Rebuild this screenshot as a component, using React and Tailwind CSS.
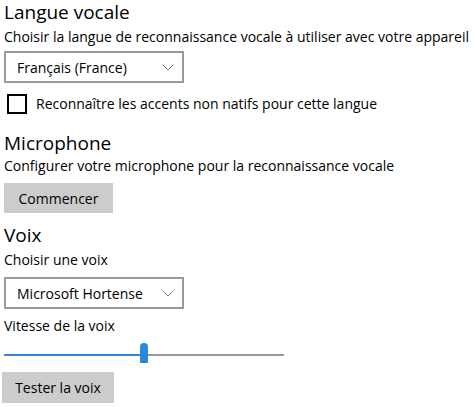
import React from "react";

function Chevron() {
  return (
    <svg width="12" height="7" viewBox="0 0 12 7" className="block">
      <path d="M0.5 0.5 L6 6 L11.5 0.5" fill="none" stroke="#7a7a7a" strokeWidth="1" />
    </svg>
  );
}

function Select({ label }) {
  return (
    <div className="w-[180px] h-[32px] border-2 border-[#999999] flex items-center justify-between pl-[11px] pr-[8px] text-[14px] text-black">
      <span>{label}</span>
      <Chevron />
    </div>
  );
}

export default function App() {
  return (
    <div
      className="w-[475px] h-[407px] bg-white text-black overflow-hidden pl-[4px]"
      style={{ fontFamily: '"Open Sans", "Noto Sans", sans-serif' }}
    >
      <div className="text-[19px] leading-[24px]">Langue vocale</div>
      <div className="text-[14px] leading-[20px] mt-[3px] whitespace-nowrap">
        Choisir la langue de reconnaissance vocale à utiliser avec votre appareil
      </div>
      <div className="mt-[4px]">
        <Select label="Français (France)" />
      </div>
      <div className="flex items-center mt-[11px] ml-[3px] gap-[9px]">
        <div className="w-[20px] h-[20px] border-2 border-black" />
        <span className="text-[14px] leading-[20px]">Reconnaître les accents non natifs pour cette langue</span>
      </div>
      <div className="text-[19px] leading-[24px] mt-[17px]">Microphone</div>
      <div className="text-[14px] leading-[20px] mt-[1px] whitespace-nowrap">
        Configurer votre microphone pour la reconnaissance vocale
      </div>
      <button className="mt-[7px] w-[109px] h-[30px] bg-[#cccccc] text-[14px] text-black flex items-center justify-center">
        Commencer
      </button>
      <div className="text-[19px] leading-[24px] mt-[10px]">Voix</div>
      <div className="text-[14px] leading-[20px] mt-[3px]">Choisir une voix</div>
      <div className="mt-[7px]">
        <Select label="Microsoft Hortense" />
      </div>
      <div className="text-[14px] leading-[20px] mt-[7px]">Vitesse de la voix</div>
      <div className="relative w-[280px] h-[20px] mt-[7px]">
        <div className="absolute left-0 top-[11px] h-[2px] w-[140px] bg-[#2b88d8]" />
        <div className="absolute left-[140px] right-0 top-[11px] h-[2px] bg-[#999999]" />
        <div className="absolute left-[136px] top-0 w-[8px] h-[20px] rounded-t-[4px] rounded-b-[1px] bg-[#2b88d8]" />
      </div>
      <button className="-ml-[2px] mt-[9px] w-[112px] h-[31px] bg-[#cccccc] text-[14px] text-black flex items-center justify-center">
        Tester la voix
      </button>
    </div>
  );
}
